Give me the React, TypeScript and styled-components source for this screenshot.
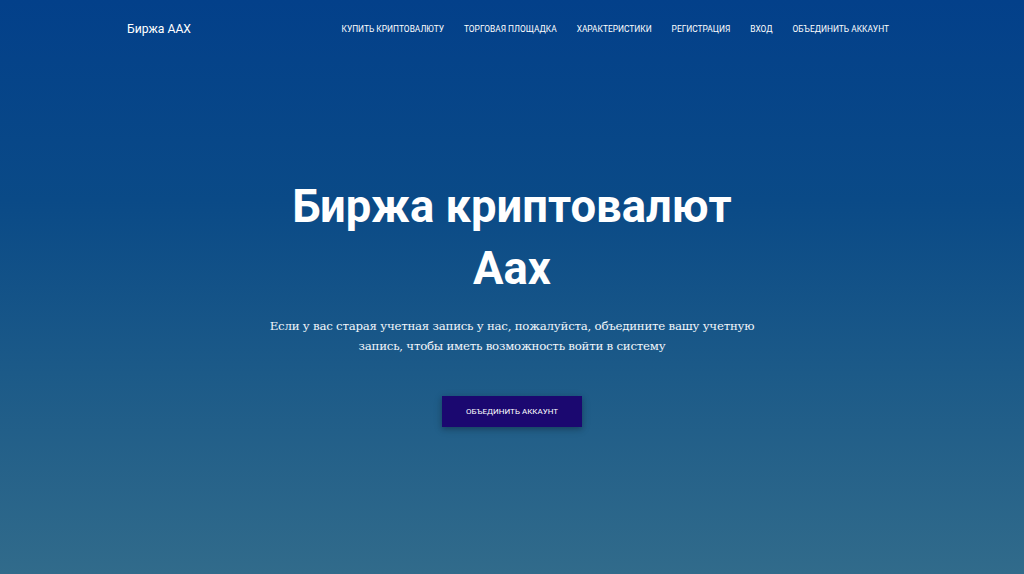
import React from "react";
import styled, { createGlobalStyle } from "styled-components";

const Global = createGlobalStyle`
  html, body { margin: 0; padding: 0; }
  body { font-family: Roboto, "Noto Sans", sans-serif; }
  * { box-sizing: border-box; }
`;

const Page = styled.div`
  width: 100%;
  height: 574px;
  background: linear-gradient(180deg, #03408a 0%, #0a4a87 35%, #1c5a88 65%, #316b8b 100%);
  display: flex;
  flex-direction: column;
  color: #fff;
  overflow: hidden;
`;

const NavBar = styled.nav`
  display: flex;
  align-items: center;
  justify-content: space-between;
  padding: 0 125px 0 127px;
  height: 58px;
`;

const Brand = styled.a`
  font-family: Roboto, sans-serif;
  font-size: 12.2px;
  font-weight: 400;
  color: #fff;
  text-decoration: none;
`;

const NavList = styled.ul`
  display: flex;
  list-style: none;
  margin: 0;
  padding: 0;
`;

const NavItem = styled.li`
  font-family: Roboto, sans-serif;
  font-size: 8.4px;
  font-weight: 400;
  text-transform: uppercase;
  color: #fff;
  padding: 0 10px;
`;

const Hero = styled.main`
  flex: 1;
  display: flex;
  flex-direction: column;
  align-items: center;
  text-align: center;
  padding-top: 118px;
`;

const Title = styled.h1`
  font-family: Roboto, sans-serif;
  font-weight: 700;
  font-size: 45.4px;
  line-height: 62px;
  margin: 0;
  width: 480px;
`;

const Lead = styled.p`
  font-family: "DejaVu Serif", "Liberation Serif", serif;
  font-size: 11.8px;
  letter-spacing: -0.25px;
  line-height: 20px;
  margin: 16px 0 0 0;
  width: 500px;
  color: #f2f6fb;
`;

const Button = styled.a`
  margin-top: 40px;
  width: 140px;
  height: 31px;
  display: flex;
  align-items: center;
  justify-content: center;
  background: #1b0870;
  color: #fff;
  font-family: Roboto, sans-serif;
  font-size: 8px;
  font-weight: 400;
  text-transform: uppercase;
  box-shadow: 0 2px 5px rgba(0, 0, 0, 0.2), 0 2px 10px rgba(0, 0, 0, 0.15);
  text-decoration: none;
`;

const links = [
  "Купить криптовалюту",
  "Торговая площадка",
  "Характеристики",
  "Регистрация",
  "Вход",
  "Объединить аккаунт",
];

export default function App() {
  return (
    <>
      <Global />
      <Page>
        <NavBar>
          <Brand href="#">Биржа ААХ</Brand>
          <NavList>
            {links.map((l) => (
              <NavItem key={l}>{l}</NavItem>
            ))}
          </NavList>
        </NavBar>
        <Hero>
          <Title>Биржа криптовалют Aax</Title>
          <Lead>
            Если у вас старая учетная запись у нас, пожалуйста, объедините вашу учетную
            запись, чтобы иметь возможность войти в систему
          </Lead>
          <Button href="#">Объединить аккаунт</Button>
        </Hero>
      </Page>
    </>
  );
}
